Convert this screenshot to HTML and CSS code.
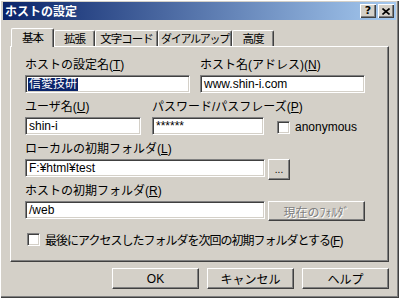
FILE: index.html
```html
<!DOCTYPE html>
<html lang="ja">
<head>
    <meta charset="UTF-8">
    <title>ホストの設定</title>
    <link rel="stylesheet" href="styles.css">
</head>
<body>

    <div class="window">
        <div class="titlebar">
            <span class="title">ホストの設定</span>
            <div class="caption-buttons">
                <span class="cap-btn help-mark">?</span>
                <span class="cap-btn">
                    <svg width="8" height="7" viewBox="0 0 8 7"><path d="M0.5 0.5 L7.5 6.5 M7.5 0.5 L0.5 6.5" stroke="#000" stroke-width="1.6" fill="none"/></svg>
                </span>
            </div>
        </div>

        <div class="tabs">
            <div class="tab active" style="width:43px">基本</div>
            <div class="tab" style="width:41px">拡張</div>
            <div class="tab" style="width:63px">文字コード</div>
            <div class="tab narrow" style="width:74px">ダイアルアップ</div>
            <div class="tab" style="width:42px">高度</div>
        </div>

        <div class="panel">
            <div class="row">
                <div class="field wide">
                    <label>ホストの設定名(<u>T</u>)</label>
                    <div class="input"><span class="selected">信愛技研</span></div>
                </div>
                <div class="field wide">
                    <label>ホスト名(アドレス)(<u>N</u>)</label>
                    <div class="input">www.shin-i.com</div>
                </div>
            </div>

            <div class="row">
                <div class="field user">
                    <label>ユーザ名(<u>U</u>)</label>
                    <div class="input">shin-i</div>
                </div>
                <div class="field pass">
                    <label>パスワード/パスフレーズ(<u>P</u>)</label>
                    <div class="input">******</div>
                </div>
                <div class="check anon">
                    <span class="box"></span>
                    <span>anonymous</span>
                </div>
            </div>

            <div class="row">
                <div class="field">
                    <label>ローカルの初期フォルダ(<u>L</u>)</label>
                    <div class="with-button">
                        <div class="input long">F:¥html¥test</div>
                        <button class="btn browse">...</button>
                    </div>
                </div>
            </div>

            <div class="row">
                <div class="field">
                    <label>ホストの初期フォルダ(<u>R</u>)</label>
                    <div class="with-button">
                        <div class="input long">/web</div>
                        <button class="btn current disabled">現在のﾌｫﾙﾀﾞ</button>
                    </div>
                </div>
            </div>

            <div class="check last">
                <span class="box"></span>
                <span class="last-text">最後にアクセスしたフォルダを次回の初期フォルダとする(<u>F</u>)</span>
            </div>
        </div>

        <div class="actions">
            <button class="btn action">OK</button>
            <button class="btn action">キャンセル</button>
            <button class="btn action">ヘルプ</button>
        </div>
    </div>

</body>
</html>
```

FILE: styles.css
```css
body {
    margin: 0;
    font-family: "Liberation Sans", "Noto Sans CJK JP", sans-serif;
    font-size: 12px;
    color: #000;
    background-color: #d4d0c8;
}

.window {
    box-sizing: border-box;
    width: 399px;
    height: 298px;
    padding: 2px 3px 3px 3px;
    background-color: #d4d0c8;
    box-shadow: inset 1px 1px #ffffff, inset -1px -1px #404040, inset -2px -2px #808080;
}

/* title bar */
.titlebar {
    height: 18px;
    display: flex;
    align-items: center;
    justify-content: space-between;
    padding: 0 2px 0 2px;
    background: linear-gradient(to right, #0a246a, #a6caf0);
}
.title {
    color: #fff;
    font-weight: bold;
    font-family: "Noto Sans CJK JP", sans-serif;
    line-height: 18px;
}
.caption-buttons {
    display: flex;
    gap: 2px;
}
.cap-btn {
    box-sizing: border-box;
    width: 16px;
    height: 14px;
    display: flex;
    align-items: center;
    justify-content: center;
    background-color: #d4d0c8;
    box-shadow: inset 1px 1px #ffffff, inset -1px -1px #404040, inset -2px -2px #808080;
}
.help-mark {
    font-family: "DejaVu Sans", sans-serif;
    font-weight: bold;
    font-size: 11px;
    line-height: 14px;
}

/* tabs */
.tabs {
    display: flex;
    align-items: flex-end;
    height: 18px;
    margin-top: 8px;
    padding-left: 8px;
}
.tab {
    box-sizing: border-box;
    height: 16px;
    line-height: 15px;
    text-align: center;
    white-space: nowrap;
    overflow: hidden;
    font-size: 11.5px;
    letter-spacing: -1px;
    font-family: "Noto Sans CJK JP", sans-serif;
    border-top: 1px solid #fff;
    border-left: 1px solid #fff;
    border-right: 1px solid #404040;
    box-shadow: inset -1px 0 #808080;
    border-radius: 2px 2px 0 0;
}
.tab.narrow {
    font-size: 11px;
    letter-spacing: -1.3px;
}
.tab.active {
    height: 19px;
    line-height: 17px;
    margin-bottom: -1px;
    position: relative;
    z-index: 1;
    background-color: #d4d0c8;
}

/* panel */
.panel {
    box-sizing: border-box;
    width: 379px;
    height: 216px;
    margin-left: 7px;
    padding: 11px 0 0 14px;
    border-top: 1px solid #fff;
    border-left: 1px solid #fff;
    border-right: 1px solid #404040;
    border-bottom: 1px solid #404040;
    box-shadow: inset -1px -1px #808080;
}
.row {
    display: flex;
    height: 42px;
}
.field label {
    display: block;
    height: 14px;
    line-height: 14px;
    margin-bottom: 3px;
    white-space: nowrap;
}
.field.wide {
    width: 165px;
    margin-right: 10px;
}
.field.user {
    width: 116px;
    margin-right: 11px;
}
.field.pass {
    width: 112px;
    margin-right: 13px;
}

.input {
    box-sizing: border-box;
    height: 18px;
    padding: 2px 0 0 3px;
    line-height: 13px;
    background-color: #fff;
    white-space: nowrap;
    overflow: hidden;
    border-top: 1px solid #808080;
    border-left: 1px solid #808080;
    border-right: 1px solid #fff;
    border-bottom: 1px solid #fff;
    box-shadow: inset 1px 1px #404040, inset -1px -1px #d4d0c8;
}
.selected {
    display: inline-block;
    background-color: #0a246a;
    color: #fff;
    line-height: 13px;
    margin-left: -1px;
    padding: 0 1px;
}
.input.long {
    width: 240px;
}

.with-button {
    display: flex;
    align-items: flex-start;
    gap: 3px;
}

/* buttons */
.btn {
    box-sizing: border-box;
    margin: 0;
    padding: 0;
    font-family: "Liberation Sans", "Noto Sans CJK JP", sans-serif;
    font-size: 12px;
    color: #000;
    background-color: #d4d0c8;
    border-top: 1px solid #fff;
    border-left: 1px solid #fff;
    border-right: 1px solid #404040;
    border-bottom: 1px solid #404040;
    box-shadow: inset -1px -1px #808080;
}
.btn.browse {
    width: 22px;
    height: 21px;
    font-size: 10px;
    line-height: 10px;
}
.btn.current {
    width: 97px;
    height: 20px;
}
.btn.disabled {
    color: #808080;
    text-shadow: 1px 1px #fff;
}

/* checkboxes */
.check {
    display: flex;
    align-items: center;
    gap: 5px;
    white-space: nowrap;
}
.check .box {
    box-sizing: border-box;
    width: 13px;
    height: 13px;
    background-color: #fff;
    border-top: 1px solid #808080;
    border-left: 1px solid #808080;
    border-right: 1px solid #fff;
    border-bottom: 1px solid #fff;
    box-shadow: inset 1px 1px #404040, inset -1px -1px #d4d0c8;
}
.check.anon {
    align-self: flex-start;
    margin-top: 20px;
}
.check.last {
    margin-top: 7px;
    margin-left: 2px;
    height: 13px;
}
.last-text {
    letter-spacing: -1px;
}

/* bottom buttons */
.actions {
    display: flex;
    justify-content: flex-end;
    gap: 8px;
    margin-top: 6px;
    margin-right: 7px;
}
.btn.action {
    width: 87px;
    height: 21px;
}
```
